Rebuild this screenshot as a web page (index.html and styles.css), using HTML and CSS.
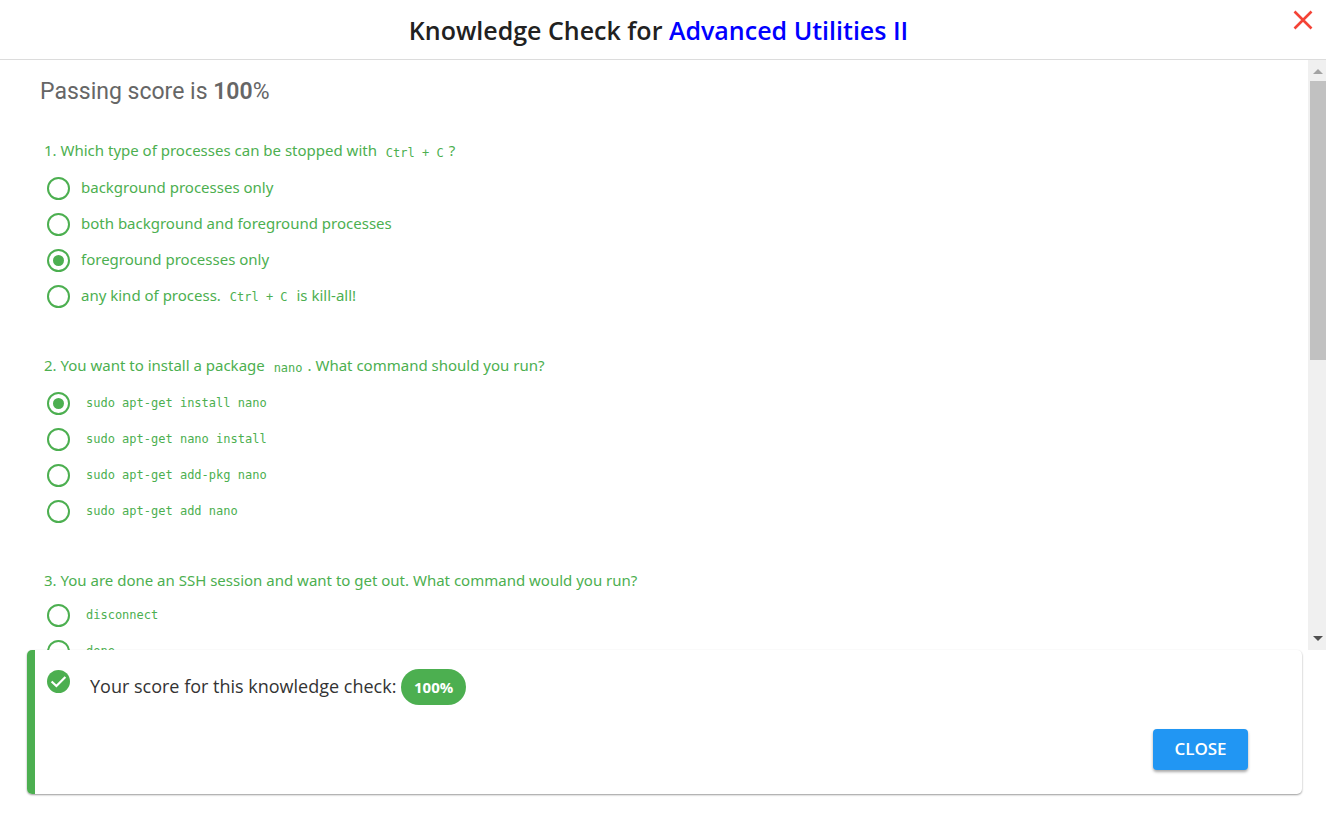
FILE: index.html
```html
<!DOCTYPE html>
<html lang="en">
<head>
<meta charset="utf-8">
<title>Knowledge Check for Advanced Utilities II</title>
<link rel="stylesheet" href="styles.css">
</head>
<body>
<main class="dialog">
  <header class="header">
    <h1 class="title">Knowledge Check for <a class="title-link" href="#lesson">Advanced Utilities II</a></h1>
    <button class="dismiss" type="button" aria-label="Dismiss">
      <svg class="dismiss-icon" viewBox="0 0 20 20" aria-hidden="true"><path d="M1.5 1.5l17 17M18.5 1.5l-17 17" fill="none" stroke="#f44336" stroke-width="2.6"/></svg>
    </button>
  </header>
  <div class="body">
    <form class="quiz">
      <h2 class="passing">Passing score is <strong class="passing-value">100</strong>%</h2>
      <fieldset class="question">
        <legend class="prompt">1. Which type of processes can be stopped with <code class="code">Ctrl + C</code>?</legend>
        <label class="option"><input class="radio" type="radio" name="q1"><span class="answer">background processes only</span></label>
        <label class="option"><input class="radio" type="radio" name="q1"><span class="answer">both background and foreground processes</span></label>
        <label class="option"><input class="radio" type="radio" name="q1" checked><span class="answer">foreground processes only</span></label>
        <label class="option"><input class="radio" type="radio" name="q1"><span class="answer">any kind of process. <code class="code">Ctrl + C</code> is kill-all!</span></label>
      </fieldset>
      <fieldset class="question">
        <legend class="prompt">2. You want to install a package <code class="code">nano</code>. What command should you run?</legend>
        <label class="option"><input class="radio" type="radio" name="q2" checked><code class="code">sudo apt-get install nano</code></label>
        <label class="option"><input class="radio" type="radio" name="q2"><code class="code">sudo apt-get nano install</code></label>
        <label class="option"><input class="radio" type="radio" name="q2"><code class="code">sudo apt-get add-pkg nano</code></label>
        <label class="option"><input class="radio" type="radio" name="q2"><code class="code">sudo apt-get add nano</code></label>
      </fieldset>
      <fieldset class="question">
        <legend class="prompt">3. You are done an SSH session and want to get out. What command would you run?</legend>
        <label class="option"><input class="radio" type="radio" name="q3"><code class="code">disconnect</code></label>
        <label class="option"><input class="radio" type="radio" name="q3"><code class="code">done</code></label>
      </fieldset>
    </form>
    <div class="scrollbar" aria-hidden="true">
      <svg class="arrow" viewBox="0 0 18 21"><path d="M9 9l5 5H4z" fill="#a3a3a3"/></svg>
      <div class="track"><div class="thumb"></div></div>
      <svg class="arrow" viewBox="0 0 18 21"><path d="M9 12L4 7h10z" fill="#505050"/></svg>
    </div>
  </div>
  <section class="result">
    <div class="score">
      <svg class="check" viewBox="0 0 24 24" aria-hidden="true"><circle cx="12" cy="12" r="12" fill="#4caf50"/><path d="M4.8 12l5 4.7 9.4-9.4" fill="none" stroke="#fff" stroke-width="2.3"/></svg>
      <p class="score-text">Your score for this knowledge check: <span class="badge">100%</span></p>
    </div>
    <button class="close" type="button">CLOSE</button>
  </section>
</main>
</body>
</html>
```
FILE: styles.css
```css
* { box-sizing: border-box; }

body {
  margin: 0;
  background: #fff;
  color: #212121;
  font-family: "Noto Sans", "Open Sans", sans-serif;
}

.dialog {
  display: flex;
  flex-direction: column;
  height: 100vh;
  overflow: hidden;
}

.header {
  display: flex;
  flex: none;
  height: 60px;
  padding-left: 32px;
  border-bottom: 1px solid #dcdcdc;
}

.title {
  flex: 1;
  margin: 0;
  font-family: "Open Sans", "Noto Sans", sans-serif;
  font-size: 25px;
  font-weight: 600;
  line-height: 60px;
  text-align: center;
}

.title-link {
  color: #00f;
  text-decoration: none;
}

.dismiss {
  align-self: flex-start;
  width: 41px;
  height: 40px;
  padding: 10px 8px;
  border: 0;
  background: none;
}

.dismiss-icon {
  display: block;
  width: 20px;
  height: 20px;
  margin-left: auto;
  margin-right: 6px;
}

.body {
  display: flex;
  flex: 1;
  min-height: 0;
}

.quiz {
  flex: 1;
  padding: 17px 40px 0;
  overflow: hidden;
  color: #4caf50;
  font-size: 15px;
}

.passing {
  margin: 0 0 27px;
  color: #666;
  font: 400 23px/30px Roboto, sans-serif;
}

.passing-value { font-weight: 600; }

.question {
  margin: 0 0 35px;
  padding: 0;
  border: 0;
}

.prompt {
  padding: 0 4px;
  line-height: 33px;
}

.prompt .code {
  display: inline-block;
  vertical-align: -1px;
}

.option {
  display: flex;
  align-items: center;
  gap: 11px;
  height: 36px;
  padding-left: 7px;
}

.answer { padding-bottom: 2px; }

.radio {
  display: grid;
  place-content: center;
  flex: none;
  width: 23px;
  height: 23px;
  margin: 0;
  border: 2px solid #4caf50;
  border-radius: 50%;
  appearance: none;
}

.radio:checked::before {
  content: "";
  width: 11px;
  height: 11px;
  border-radius: 50%;
  background: #4caf50;
}

.code {
  padding: 0 5px;
  font-family: "DejaVu Sans Mono", monospace;
  font-size: 12px;
}

.scrollbar {
  display: flex;
  flex: none;
  flex-direction: column;
  width: 18px;
  background: #f0f0f0;
}

.arrow {
  flex: none;
  width: 18px;
  height: 21px;
  margin-left: 1px;
}

.track { flex: 1; }

.thumb {
  height: 51%;
  margin-left: 2px;
  background: #c1c1c1;
}

.result {
  display: flex;
  flex: none;
  flex-direction: column;
  gap: 24px;
  margin: 0 24px 21px 27px;
  padding: 18px 54px 24px 12px;
  border-left: 8px solid #4caf50;
  border-radius: 5px;
  box-shadow: 0 1px 2px rgba(0, 0, 0, 0.4);
}

.score {
  display: flex;
  gap: 20px;
}

.check {
  width: 23px;
  height: 23px;
  margin-top: 2px;
}

.score-text {
  margin: 0;
  color: #333;
  font-family: "Open Sans", "Noto Sans", sans-serif;
  font-size: 18px;
  line-height: 36px;
}

.badge {
  display: inline-block;
  padding: 0 13px;
  border-radius: 18px;
  background: #4caf50;
  color: #fff;
  font-size: 15px;
  font-weight: 700;
}

.close {
  align-self: flex-end;
  width: 95px;
  height: 41px;
  padding: 0 0 2px;
  border: 0;
  border-radius: 4px;
  background: #2196f3;
  box-shadow: 0 2px 3px rgba(0, 0, 0, 0.35);
  color: #fff;
  font: 600 17px "Open Sans", "Noto Sans", sans-serif;
}
```
